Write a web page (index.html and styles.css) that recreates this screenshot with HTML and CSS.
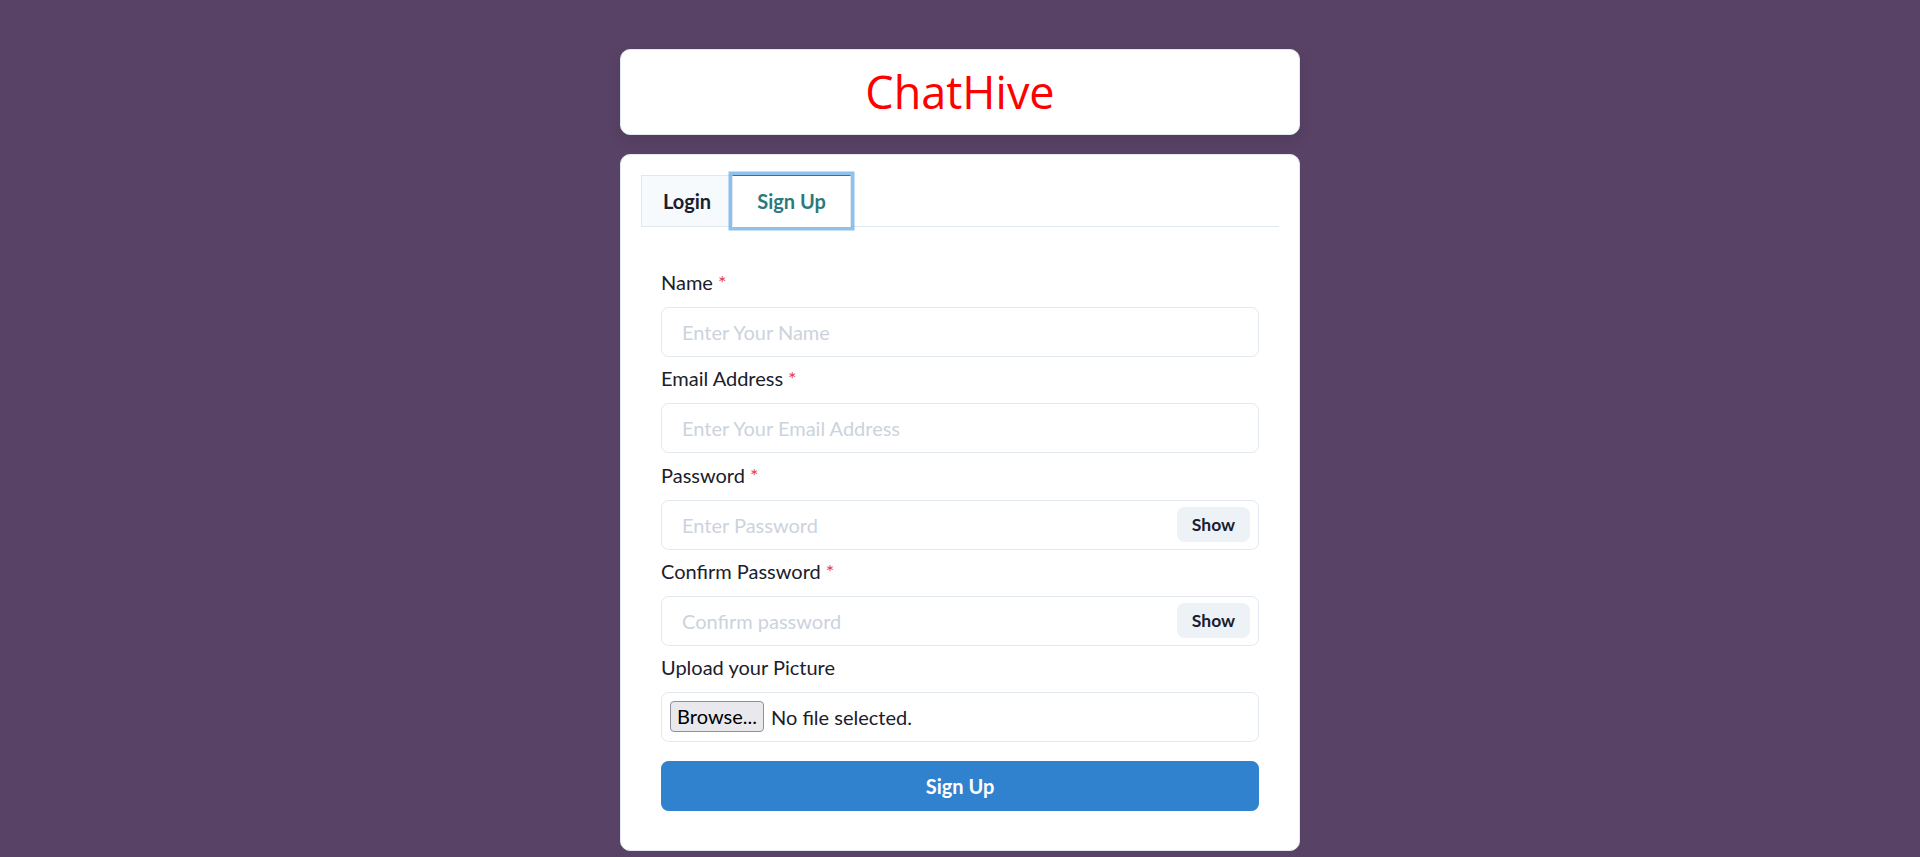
FILE: index.html
```
<!DOCTYPE html>
<html lang="en">
<head>
<meta charset="utf-8">
<title>ChatHive</title>
<link rel="stylesheet" href="styles.css">
</head>
<body>
<div class="container">
  <div class="brand-box">
    <h1 class="brand">ChatHive</h1>
  </div>
  <div class="auth-card">
    <div class="tab-list">
      <button class="tab tab-login" type="button">Login</button>
      <button class="tab tab-signup is-selected" type="button">Sign Up</button>
    </div>
    <form class="tab-panel">
      <div class="field">
        <label class="field-label">Name<span class="required">*</span></label>
        <input class="text-input" type="text" placeholder="Enter Your Name">
      </div>
      <div class="field">
        <label class="field-label">Email Address<span class="required">*</span></label>
        <input class="text-input" type="email" placeholder="Enter Your Email Address">
      </div>
      <div class="field">
        <label class="field-label">Password<span class="required">*</span></label>
        <div class="input-group">
          <input class="text-input with-right" type="password" placeholder="Enter Password">
          <button class="show-btn" type="button">Show</button>
        </div>
      </div>
      <div class="field">
        <label class="field-label">Confirm Password<span class="required">*</span></label>
        <div class="input-group">
          <input class="text-input with-right" type="password" placeholder="Confirm password">
          <button class="show-btn" type="button">Show</button>
        </div>
      </div>
      <div class="field">
        <label class="field-label">Upload your Picture</label>
        <div class="file-input">
          <span class="browse-btn">Browse...</span>
          <span class="file-status">No file selected.</span>
        </div>
      </div>
      <button class="submit-btn" type="button">Sign Up</button>
    </form>
  </div>
</div>
</body>
</html>
```
FILE: styles.css
```
* { box-sizing: border-box; }

html, body {
  margin: 0;
  height: 100%;
}

body {
  background: #584265;
  font-family: "Lato", "Liberation Sans", sans-serif;
  color: #1a202c;
  overflow: hidden;
}

.container {
  width: 680px;
  margin: 0 auto;
  padding-top: 49px;
  display: flex;
  flex-direction: column;
}

.brand-box {
  height: 86px;
  background: #fff;
  border: 1px solid #e2e8f0;
  border-radius: 10px;
  display: flex;
  justify-content: center;
  padding: 15px 0 15px;
  box-shadow: 0 6px 14px rgba(40, 25, 50, 0.12);
}

.brand {
  margin: 0;
  font-family: "Open Sans", sans-serif;
  font-weight: 400;
  font-size: 45px;
  line-height: 54px;
  color: #ff0000;
}

.auth-card {
  margin-top: 19px;
  background: #fff;
  border: 1px solid #e2e8f0;
  border-radius: 10px;
  padding: 20px;
}

.tab-list {
  display: flex;
  border-bottom: 1px solid #e2e8f0;
}

.tab {
  height: 52px;
  margin-bottom: -1px;
  padding: 0 20px;
  border: 1px solid #e2e8f0;
  background: #f7fafc;
  font-family: inherit;
  font-size: 20px;
  font-weight: 700;
  line-height: 30px;
  color: #1a202c;
  cursor: pointer;
}

.tab-login { width: 92px; }

.tab-signup {
  width: 119px;
  margin-left: -1px;
}

.tab.is-selected {
  position: relative;
  z-index: 1;
  background: #fff;
  color: #2c7a7b;
  border-top-color: #2c7a7b;
  border-bottom-color: transparent;
  box-shadow: 0 0 0 3.5px rgba(66, 153, 225, 0.6);
}

.tab-panel {
  padding: 40px 20px 19px;
  display: flex;
  flex-direction: column;
  gap: 6.25px;
}

.field {
  display: flex;
  flex-direction: column;
}

.field-label {
  font-size: 20px;
  line-height: 30px;
  font-weight: 400;
  margin-bottom: 10px;
  color: #1a202c;
}

.required {
  color: #e53e3e;
  margin-left: 5px;
}

.text-input {
  width: 100%;
  height: 50px;
  padding: 0 20px;
  border: 1px solid #e2e8f0;
  border-radius: 7.5px;
  background: #fff;
  font-family: inherit;
  font-size: 20px;
  color: #1a202c;
  outline: none;
}

.text-input::placeholder {
  color: #ccd3dd;
  opacity: 1;
}

.text-input.with-right { padding-right: 90px; }

.input-group { position: relative; }

.show-btn {
  position: absolute;
  right: 9px;
  top: 7.5px;
  width: 73px;
  height: 35px;
  border: none;
  border-radius: 7.5px;
  background: #edf2f7;
  font-family: inherit;
  font-size: 17.5px;
  font-weight: 700;
  color: #1a202c;
  cursor: pointer;
}

.file-input {
  height: 50px;
  border: 1px solid #e2e8f0;
  border-radius: 7.5px;
  display: flex;
  align-items: center;
  padding: 0 8px;
  font-size: 20px;
}

.browse-btn {
  width: 94px;
  height: 31px;
  margin-top: -2px;
  display: flex;
  align-items: center;
  justify-content: center;
  background: #e9e9ed;
  border: 1px solid #8f8f9d;
  border-radius: 4px;
  color: #000;
  font-size: 20px;
}

.file-status {
  margin-left: 7px;
  color: #1a202c;
}

.submit-btn {
  margin-top: 12.5px;
  width: 100%;
  height: 50px;
  border: none;
  border-radius: 7.5px;
  background: #3182ce;
  color: #fff;
  font-family: inherit;
  font-size: 20px;
  font-weight: 700;
  cursor: pointer;
}
```
